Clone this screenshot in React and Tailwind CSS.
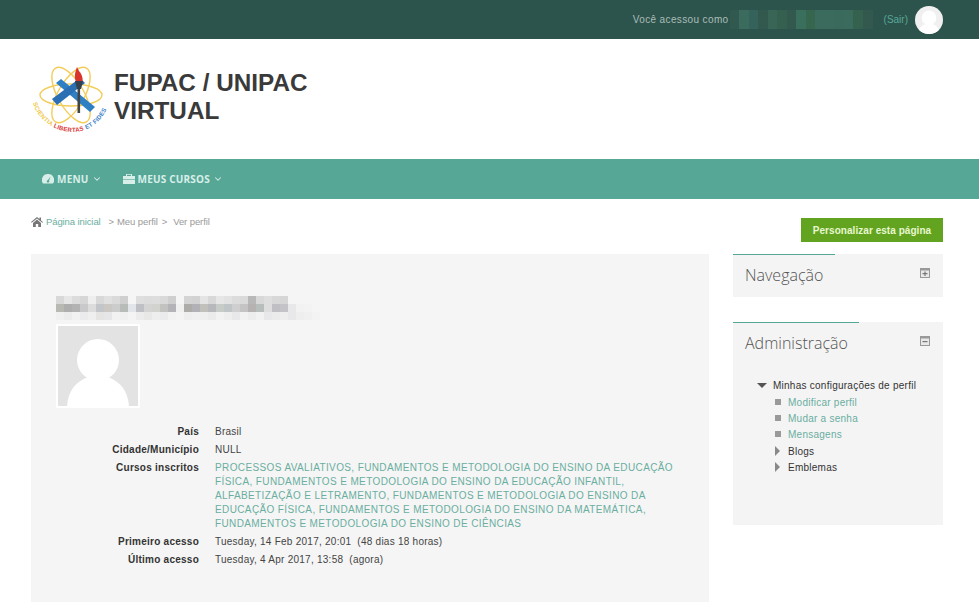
import { ChevronDown } from 'lucide-react';

const sans = "font-['Liberation_Sans',Arial,sans-serif]";

// pixelated (censored) blocks
const topBlur = ['#31594f', '#3a6b5d', '#35625a', '#33594f', '#386556', '#35604f', '#33594f', '#3a6e5d', '#37664f', '#3a6b5d', '#3a6b5d', '#396a5c', '#3a6b5d', '#35614f', '#33594f'];
const nameBlur = [
  ['#d8d8d8', '#e6e6e6', '#dcdcdc', '#d6d6d6', '#eeeeee', '#d8d8d8', '#e0e0e0', '#dadada', '#cfcfcf', '#f5f5f5', '#dedede', '#dcdcdc', '#dddddd', '#d9d9d9', '#cfcfcf', '#f5f5f5', '#d4d4d4', '#d2d2d2', '#e4e4e4', '#d8d8d8', '#e6e6e6', '#e2e2e2', '#dcdcdc', '#dadada', '#b8b8b8', '#d8d8d8', '#dedede', '#d8d8d8', '#d6d6d6', '#f5f5f5', '#f5f5f5', '#f5f5f5', '#f5f5f5'],
  ['#b9b9b4', '#aeaeae', '#b3b3b3', '#c9c9cc', '#dcdcdc', '#c2c6c8', '#cbc8c4', '#cccccc', '#b8bcb8', '#e2e6ea', '#bfbfc6', '#d4d4d4', '#d2d2ce', '#c2c2c0', '#b4b4b8', '#f0f0f0', '#aeaca8', '#b2b2b6', '#c2c0ba', '#b6b8bc', '#c8ccc8', '#c0c6c8', '#cfcfcf', '#c4c4c4', '#b6b2b2', '#b8bebc', '#dedede', '#c0c0c4', '#c4c4c8', '#e8e8ea', '#f2f2f2', '#f3f3f3', '#f5f5f5'],
  ['#f0f0f0', '#ececec', '#f2f2f2', '#ebebee', '#efefef', '#e6e4e2', '#e6e6e8', '#f2f2f2', '#f0f0f0', '#f4f4f4', '#ececec', '#e8e8e6', '#eeeeee', '#ebebee', '#f2f2f2', '#f4f4f4', '#eeeeee', '#f0f0f0', '#efefef', '#ebebeb', '#f2f2f2', '#eeeeee', '#e8e8ea', '#f2f2f2', '#ededed', '#f2f2f2', '#e8e8ea', '#ebebeb', '#eeeeee', '#e8e8ea', '#eeeeee', '#f0f0f0', '#f3f3f3'],
];

function AvatarSilhouette({ className, bg, fg }) {
  return (
    <svg viewBox="0 0 80 80" className={className}>
      <rect width="80" height="80" fill={bg} />
      <circle cx="40" cy="34" r="21" fill={fg} />
      <path d="M9 81 C10 60 24 50 40 50 C56 50 70 60 71 81 Z" fill={fg} />
    </svg>
  );
}

function Logo() {
  return (
    <svg viewBox="0 0 80 80" className="w-[80px] h-[80px] shrink-0">
      <g fill="none" stroke="#f2cd5a" strokeWidth="1.4">
        <ellipse cx="39" cy="34" rx="13" ry="31" transform="rotate(-30 39 34)" />
        <ellipse cx="39" cy="34" rx="13" ry="31" transform="rotate(30 39 34)" />
        <ellipse cx="39" cy="34" rx="31" ry="11" />
      </g>
      <path d="M24 22 L29 18 L63 46 L58 51 Z" fill="#2f7fc4" />
      <path d="M20 38 L48 17 L53 22 L25 44 Z" fill="#2a6fb4" />
      <rect x="45.5" y="22" width="2.6" height="30" fill="#444" />
      <path d="M45 6 C43 12 42 15 44 21 L50 23 C52 17 49 12 47 10 Z" fill="#d8342c" />
      <path d="M43 20 L51 20 L49 28 L45 28 Z" fill="#33404e" />
      <defs>
        <path id="logoArc" d="M1 42 C6 60 24 71 41 71 C57 71 71 60 76 44" />
      </defs>
      <text fontFamily="Liberation Sans, Arial, sans-serif" fontSize="6.1" fontWeight="700">
        <textPath href="#logoArc" startOffset="0">
          <tspan fill="#eec94a">SCIENTIA </tspan>
          <tspan fill="#d83a3a">LIBERTAS </tspan>
          <tspan fill="#3c82c8">ET FIDES</tspan>
        </textPath>
      </text>
    </svg>
  );
}

function GaugeIcon() {
  return (
    <svg viewBox="0 0 12 10" className="w-[12px] h-[10px]" fill="#d8efe9">
      <path d="M6 0 A6 6 0 0 0 1 9.5 L11 9.5 A6 6 0 0 0 6 0 Z" />
      <path d="M5.2 7 L8.6 2.6 L6.8 7.6 Z" fill="#57a797" />
      <circle cx="6" cy="7.4" r="1.2" fill="#57a797" />
    </svg>
  );
}

function BriefcaseIcon() {
  return (
    <svg viewBox="0 0 12 10" className="w-[12px] h-[10px]" fill="#d8efe9">
      <path d="M4 2 V0.8 H8 V2 H9 V0 H3 V2 Z" />
      <rect x="0" y="2" width="12" height="3.4" />
      <rect x="0" y="6" width="12" height="4" />
    </svg>
  );
}

function HomeIcon() {
  return (
    <svg viewBox="0 0 12 10" className="w-[12px] h-[10px] shrink-0" fill="#777">
      <path d="M6 0 L8.5 2.1 V0.6 H10 V3.4 L12 5 L11.3 5.8 L6 1.5 L0.7 5.8 L0 5 Z" />
      <path d="M2 6 L6 2.6 L10 6 V10 H7.2 V7 H4.8 V10 H2 Z" />
    </svg>
  );
}

function BlockHeader({ title, lineWidth, minus }) {
  return (
    <div className="relative flex items-start justify-between pl-[12px] pr-[12px]">
      <div className={`absolute top-0 left-0 h-px bg-[#57a797] ${lineWidth}`} />
      <h3 className="font-['Open_Sans',sans-serif] font-light text-[16px] leading-[22px] tracking-normal text-[#555] pt-[10px]">{title}</h3>
      <svg viewBox="0 0 10 10" className="w-[10px] h-[10px] mt-[14px] mr-[1px]">
        <rect x="0.5" y="0.5" width="9" height="9" fill="#e8e8e8" stroke="#999" />
        <rect x="0.5" y="0.5" width="9" height="2" fill="#999" />
        <rect x="2.5" y="5" width="5" height="1.2" fill="#777" />
        {!minus && <rect x="4.4" y="3.5" width="1.2" height="4.5" fill="#777" />}
      </svg>
    </div>
  );
}

function ProfileRow({ label, children }) {
  return (
    <div className="flex">
      <div className="w-[144px] text-right font-bold text-[#333] shrink-0">{label}</div>
      <div className="ml-[16px] flex-1 text-[#444]">{children}</div>
    </div>
  );
}

function TreeItem({ icon, link, children }) {
  return (
    <div className="flex items-center h-[16px]">
      <span className="w-[13px] flex items-center shrink-0">
        {icon === 'square' ? (
          <span className="w-[6px] h-[6px] bg-[#999] block" />
        ) : (
          <span className="block w-0 h-0 border-y-[5px] border-y-transparent border-l-[5px] border-l-[#888]" />
        )}
      </span>
      <span className={link ? 'text-[#6aaea0]' : 'text-[#333]'}>{children}</span>
    </div>
  );
}

export default function App() {
  return (
    <div className={`w-[979px] h-[602px] overflow-hidden bg-white ${sans} text-[10px] tracking-[0.25px]`}>
      {/* top bar */}
      <div className="h-[39px] bg-[#2d544c] flex items-center justify-end pr-[36px] tracking-[0.37px]">
        <span className="text-[#a9bdb8]">Você acessou como</span>
        <div className="flex ml-[1px] w-[143px] h-[19px] overflow-hidden">
          {topBlur.map((c, i) => (
            <div key={i} className="flex-1" style={{ backgroundColor: c }} />
          ))}
        </div>
        <span className="ml-[11px] text-[#57a797] tracking-normal">(Sair)</span>
        <div className="ml-[7px] w-[28px] h-[28px] rounded-full overflow-hidden">
          <AvatarSilhouette className="w-full h-full" bg="#f0f0f0" fg="#ffffff" />
        </div>
      </div>

      {/* logo */}
      <div className="h-[120px] flex items-center pl-[32px] pt-[4px]">
        <Logo />
        <div className="ml-[2px] -mt-[9px] font-bold text-[24.3px] leading-[28px] text-[#3a3a3a] tracking-normal">
          <div>FUPAC / UNIPAC</div>
          <div>VIRTUAL</div>
        </div>
      </div>

      {/* menu */}
      <div className="h-[40px] bg-[#57a797] flex items-center pl-[42px] text-[#d8efe9] font-['Open_Sans',sans-serif] font-bold text-[10px] tracking-[0.2px]">
        <GaugeIcon />
        <span className="ml-[3px]">MENU</span>
        <ChevronDown size={10} strokeWidth={2.5} className="ml-[3px]" />
        <span className="ml-[21px]"><BriefcaseIcon /></span>
        <span className="ml-[3px]">MEUS CURSOS</span>
        <ChevronDown size={10} strokeWidth={2.5} className="ml-[3px]" />
      </div>

      {/* breadcrumb + button */}
      <div className="h-[55px] flex items-start pl-[31px] pr-[36px]">
        <div className="flex items-center mt-[16px] text-[#999] text-[9.5px] tracking-[-0.1px]">
          <HomeIcon />
          <span className="ml-[3px] text-[#6aaea0]">Página inicial</span>
          <span className="ml-[8px]">&gt;</span>
          <span className="ml-[3px]">Meu perfil</span>
          <span className="ml-[4px]">&gt;</span>
          <span className="ml-[6px]">Ver perfil</span>
        </div>
        <button className="ml-auto mt-[19px] w-[142px] h-[24px] bg-[#62a41f] text-[#e8f7d0] font-bold text-[10px] tracking-[0.05px]">
          Personalizar esta página
        </button>
      </div>

      {/* content */}
      <div className="flex pl-[31px] pr-[36px]">
        <div className="w-[678px] h-[348px] bg-[#f5f5f5] pl-[25px] pt-[42px] pr-[30px]">
          <div className="flex flex-col w-[264px]">
            {nameBlur.map((row, r) => (
              <div key={r} className="flex h-[8px]">
                {row.map((c, i) => (
                  <div key={i} className="flex-1" style={{ backgroundColor: c }} />
                ))}
              </div>
            ))}
          </div>
          <div className="mt-[4px] w-[84px] h-[84px] border-[2px] border-white bg-white">
            <AvatarSilhouette className="w-full h-full" bg="#e3e3e3" fg="#ffffff" />
          </div>
          <div className="mt-[17px] -ml-[1px] flex flex-col gap-[4px] leading-[14px]">
            <ProfileRow label="País">Brasil</ProfileRow>
            <ProfileRow label="Cidade/Município">NULL</ProfileRow>
            <ProfileRow label="Cursos inscritos">
              <div className="text-[#6aaea0] leading-[14px] tracking-[0.38px]">
                PROCESSOS AVALIATIVOS, FUNDAMENTOS E METODOLOGIA DO ENSINO DA EDUCAÇÃO FÍSICA, FUNDAMENTOS E METODOLOGIA DO ENSINO DA EDUCAÇÃO INFANTIL, ALFABETIZAÇÃO E LETRAMENTO, FUNDAMENTOS E METODOLOGIA DO ENSINO DA EDUCAÇÃO FÍSICA, FUNDAMENTOS E METODOLOGIA DO ENSINO DA MATEMÁTICA, FUNDAMENTOS E METODOLOGIA DO ENSINO DE CIÊNCIAS
              </div>
            </ProfileRow>
            <ProfileRow label="Primeiro acesso">Tuesday, 14 Feb 2017, 20:01&nbsp; (48 dias 18 horas)</ProfileRow>
            <ProfileRow label="Último acesso">Tuesday, 4 Apr 2017, 13:58&nbsp; (agora)</ProfileRow>
          </div>
        </div>

        <div className="ml-[24px] w-[210px]">
          <div className="h-[43px] bg-[#f4f4f4]">
            <BlockHeader title="Navegação" lineWidth="w-[102px]" />
          </div>
          <div className="mt-[25px] h-[203px] bg-[#f4f4f4]">
            <BlockHeader title="Administração" lineWidth="w-[126px]" minus />
            <div className="mt-[23px] pl-[24px] text-[#333]">
              <div className="flex items-center h-[16px]">
                <span className="block w-0 h-0 border-x-[5px] border-x-transparent border-t-[5px] border-t-[#555]" />
                <span className="ml-[6px]">Minhas configurações de perfil</span>
              </div>
              <div className="pl-[18px] mt-[1px]">
                <TreeItem icon="square" link>Modificar perfil</TreeItem>
                <TreeItem icon="square" link>Mudar a senha</TreeItem>
                <TreeItem icon="square" link>Mensagens</TreeItem>
                <div className="h-px" />
                <TreeItem icon="arrow">Blogs</TreeItem>
                <TreeItem icon="arrow">Emblemas</TreeItem>
              </div>
            </div>
          </div>
        </div>
      </div>
    </div>
  );
}
